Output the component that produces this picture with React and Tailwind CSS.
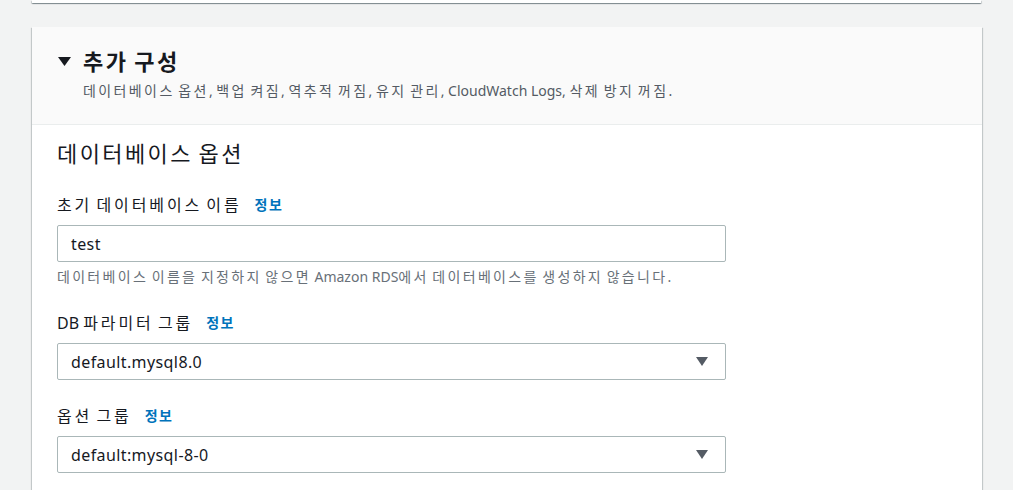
import React from "react";

const shadow =
  "shadow-[0_1px_1px_0_rgba(0,28,36,0.3),1px_1px_1px_0_rgba(0,28,36,0.15),-1px_1px_1px_0_rgba(0,28,36,0.15)]";

// Hangul runs are rendered wider in the reference font; widen them with letter-spacing.
function K({ text, ls }) {
  const parts = text.split(/([\uAC00-\uD7A3]+)/);
  return (
    <>
      {parts.map((p, i) =>
        /[\uAC00-\uD7A3]/.test(p) ? (
          <span key={i} className={ls}>
            {p}
          </span>
        ) : (
          <span key={i}>{p}</span>
        )
      )}
    </>
  );
}

function Caret({ className }) {
  return (
    <svg width="12" height="9" viewBox="0 0 12 9" className={className}>
      <polygon points="0,0 12,0 6,9" fill="currentColor" />
    </svg>
  );
}

function Label({ text, className = "" }) {
  return (
    <div className={"flex items-center text-[16px] leading-[24px] text-[#16191f] " + className}>
      <span>
        <K text={text} ls="tracking-[2.9px]" />
      </span>
      <span className="ml-[13px] text-[14px] font-bold tracking-[1.5px] text-[#0073bb]">정보</span>
    </div>
  );
}

function Select({ value, className = "" }) {
  return (
    <div
      className={
        "flex h-[37px] w-[669px] items-center justify-between rounded-[2px] border border-[#aab7b8] bg-white pl-[13px] pr-[17px] text-[16px] tracking-[0.4px] text-[#16191f] " +
        className
      }
    >
      <span>{value}</span>
      <Caret className="text-[#545b64]" />
    </div>
  );
}

export default function App() {
  return (
    <div
      className="h-[490px] w-[1013px] overflow-hidden bg-[#f2f3f3]"
      style={{ fontFamily: '"Noto Sans", "Noto Sans CJK KR", sans-serif' }}
    >
      <div className={"mx-[32px] h-[3px] w-[949px] bg-white " + shadow} />
      <div className={"mx-[32px] mt-[24px] w-[950px] bg-white " + shadow}>
        <div className="border-b border-[#eaeded] bg-[#fafafa] pb-[23px] pl-[26px] pt-[19px]">
          <div className="flex items-center text-[22px] font-bold leading-[30px] text-[#16191f]">
            <svg width="13" height="9" viewBox="0 0 13 9" className="mr-[12px] text-[#16191f]">
              <polygon points="0,0 13,0 6.5,9" fill="currentColor" />
            </svg>
            <span>
              <K text="추가 구성" ls="tracking-[2.5px]" />
            </span>
          </div>
          <div className="mt-[5px] pl-[25px] text-[14px] leading-[20px] text-[#545b64]">
            <K
              text="데이터베이스 옵션, 백업 켜짐, 역추적 꺼짐, 유지 관리, CloudWatch Logs, 삭제 방지 꺼짐."
              ls="tracking-[2.4px]"
            />
          </div>
        </div>
        <div className="px-[25px] pb-[20px] pt-[13px]">
          <div className="text-[22px] leading-[30px] text-[#16191f]">
            <K text="데이터베이스 옵션" ls="tracking-[2.4px]" />
          </div>
          <Label text="초기 데이터베이스 이름" className="mt-[25px]" />
          <div className="mt-[8px] flex h-[37px] w-[669px] items-center rounded-[2px] border border-[#aab7b8] bg-white pl-[13px] text-[16px] tracking-[0.4px] text-[#16191f]">
            test
          </div>
          <div className="mt-[5px] text-[14px] leading-[20px] text-[#687078]">
            <K
              text="데이터베이스 이름을 지정하지 않으면 Amazon RDS에서 데이터베이스를 생성하지 않습니다."
              ls="tracking-[2.3px]"
            />
          </div>
          <Label text="DB 파라미터 그룹" className="mt-[24px]" />
          <Select value="default.mysql8.0" className="mt-[8px]" />
          <Label text="옵션 그룹" className="mt-[24px]" />
          <Select value="default:mysql-8-0" className="mt-[8px]" />
        </div>
      </div>
    </div>
  );
}
